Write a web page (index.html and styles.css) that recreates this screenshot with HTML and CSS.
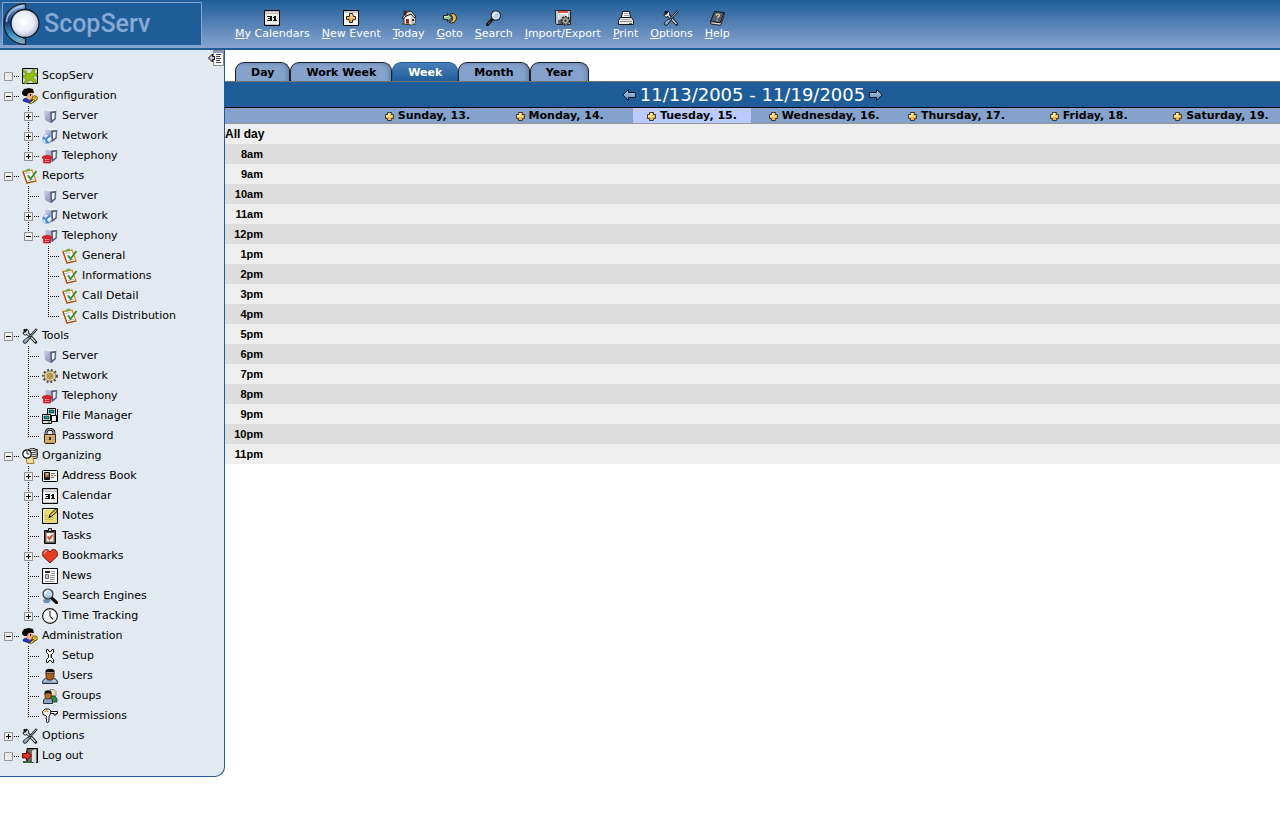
FILE: index.html
```html
<!DOCTYPE html>
<html lang="en">
<head>
<meta charset="utf-8">
<title>ScopServ - Calendar</title>
<link rel="stylesheet" href="styles.css">
</head>
<body>
<svg class="sprite" aria-hidden="true">
  <defs>
    <linearGradient id="g-srv" x1="0" y1="0" x2="1" y2="1"><stop offset="0" stop-color="#d5d8ea"/><stop offset="1" stop-color="#6a70a0"/></linearGradient>
    <linearGradient id="g-gold" x1="0" y1="0" x2="0" y2="1"><stop offset="0" stop-color="#ffe88c"/><stop offset="1" stop-color="#e09a20"/></linearGradient>
    <linearGradient id="g-arrow" x1="0" y1="0" x2="0" y2="1"><stop offset="0" stop-color="#b5d3f0"/><stop offset="1" stop-color="#5583b0"/></linearGradient>
    <radialGradient id="g-ball" cx=".45" cy=".45" r=".6"><stop offset="0" stop-color="#fff"/><stop offset=".6" stop-color="#e9ebf6"/><stop offset="1" stop-color="#9ba4c8"/></radialGradient>
    <linearGradient id="g-ring" x1="0" y1="0" x2="0" y2="1"><stop offset="0" stop-color="#9cc0e6"/><stop offset=".45" stop-color="#123a78"/><stop offset=".8" stop-color="#4aa0cc"/><stop offset="1" stop-color="#9aa8b8"/></linearGradient>
  </defs>

  <symbol id="t-empty" viewBox="0 0 20 20"><path d="M4.500 6.500h8v8h-8z" fill="#ebebeb" stroke="#999"/><path d="M14 10.500h6" stroke="#000" stroke-dasharray="1 1"/></symbol>
  <symbol id="t-box" viewBox="0 0 20 20"><path d="M4.500 6.500h8v8h-8z" fill="#f0f0ea" stroke="#8f8f8f"/><path d="M6 10.500h5" stroke="#000"/><path d="M14 10.500h5" stroke="#000" stroke-dasharray="1 1"/></symbol>
  <symbol id="t-minus" viewBox="0 0 20 20"><use href="#t-box"/></symbol>
  <symbol id="t-plus" viewBox="0 0 20 20"><use href="#t-box"/><path d="M8.500 8v5" stroke="#000"/></symbol>
  <symbol id="t-mid" viewBox="0 0 20 20"><path d="M8.500 0v20M10 10.500h9" stroke="#000" stroke-dasharray="1 1"/></symbol>
  <symbol id="t-end" viewBox="0 0 20 20"><path d="M8.500 0v11M10 10.500h9" stroke="#000" stroke-dasharray="1 1"/></symbol>
  <symbol id="t-midplus" viewBox="0 0 20 20"><path d="M8.500 0v20" stroke="#000" stroke-dasharray="1 1"/><use href="#t-plus"/></symbol>
  <symbol id="t-endplus" viewBox="0 0 20 20"><path d="M8.500 0v6" stroke="#000" stroke-dasharray="1 1"/><use href="#t-plus"/></symbol>
  <symbol id="t-endminus" viewBox="0 0 20 20"><path d="M8.500 0v6" stroke="#000" stroke-dasharray="1 1"/><use href="#t-minus"/></symbol>

  <symbol id="i-cal" viewBox="0 0 16 16"><path d="M.5 .5h15v15H.5z" fill="#efefed" stroke="#000"/><path d="M1 1h14v3H1z" fill="#bdbdbd"/><path d="M2 2h12v1H2z" fill="#dedede"/><path d="M1 14h14v1H1z" fill="#c4c4c4"/><path d="M3 6h4v1H3zM6 6h2v5H6zM4 8h3v1H4zM3 10h4v1H3zM10 6h2v5h-2zM9 7h1v1H9zM9 10h4v1H9z" fill="#111"/></symbol>
  <symbol id="i-newev" viewBox="0 0 16 16"><path d="M.5 .5h15v15H.5z" fill="#f4f4f2" stroke="#000"/><path d="M1 1h14v2H1z" fill="#c6c6c6"/><path d="M6.500 3.500h3l1 3h2v3l-3 .5v2.500h-3l-.5-3H3.500v-3h3z" fill="url(#g-gold)" stroke="#222"/></symbol>
  <symbol id="i-add" viewBox="0 0 9 9"><path d="M2.500 .5h4v2h2v4h-2v2h-4v-2h-2v-4h2z" fill="#f6b440" stroke="#3a3a3e"/><path d="M3 1h2v3h2v1H1V3h2z" fill="#ffe99a"/></symbol>
  <symbol id="i-home" viewBox="0 0 16 16"><path d="M3 7v7l7 1 4-2V7l-3-4z" fill="#f7f4ee" stroke="#333"/><path d="M10 8l4-1v6l-4 2z" fill="#c5c2ba"/><path d="M1 8l5-6 4-1 5 6-2 .5L10 4 5 6 3 8.500z" fill="#d9d6cf" stroke="#111" stroke-width=".9"/><path d="M3 1h2v4H3z" fill="#8c2a20" stroke="#111" stroke-width=".6"/><path d="M5 9h3v5l-3-.4z" fill="#a5281c"/><path d="M11 9h2v2h-2z" fill="#333"/><path d="M1 13h2v2H1zM12 14h3v1h-3z" fill="#3f6d2c"/></symbol>
  <symbol id="i-goto" viewBox="0 0 16 16"><path d="M10 3.500c3 0 4.500 2 4.500 4.300S12.700 13 9.500 13c-1 0-2-.4-2.500-1 2 0 3.500-1.500 3.500-3.500S9.500 5 8 4.500z" fill="#e4b93a" stroke="#222"/><path d="M1.500 5.500h4V3.200L10 7.500l-4.500 4.300V9.500h-4z" fill="#9bc48b" stroke="#222"/><path d="M2 6h4.500v1H2z" fill="#d8edcc"/></symbol>
  <symbol id="i-search" viewBox="0 0 16 16"><path d="M1.500 14.500l5-5.500" stroke="#111" stroke-width="3.200" stroke-linecap="round"/><path d="M2 14l2.500-2.800" stroke="#77716a" stroke-width="1"/><circle cx="9.800" cy="5.500" r="4.600" fill="#b7d2ee" stroke="#222" stroke-width="1.200"/><circle cx="9.800" cy="5.500" r="3.600" fill="none" stroke="#e8f0f8" stroke-width=".8"/><path d="M7.500 5.500c0-1.500 1-2.300 2.300-2.300" stroke="#fff" fill="none" stroke-width="1.200"/></symbol>
  <symbol id="i-imex" viewBox="0 0 16 16"><path d="M.5 .5h15v14H2l-1.500-1z" fill="#bcc6d4" stroke="#222"/><path d="M3 1h10v7H3z" fill="#fff"/><path d="M3 1h10v2H3z" fill="#dc5444"/><path d="M4 5h7M4 7h5" stroke="#aaa"/><path d="M3 10h5v4H3z" fill="#667"/><circle cx="10.500" cy="10.800" r="4.200" fill="#aaa694" stroke="#222" stroke-width="1.400" stroke-dasharray="2 1.100"/><circle cx="10.500" cy="10.800" r="3.200" fill="#b5b19f" stroke="#333" stroke-width=".7"/><circle cx="10.500" cy="10.800" r="1.200" fill="#333"/></symbol>
  <symbol id="i-print" viewBox="0 0 16 16"><path d="M4.500 1.500h7l1 6h-9z" fill="#fff" stroke="#111"/><path d="M6 3.500h4M6 5.500h5" stroke="#999"/><path d="M2.500 7.500h11l2 3v4H.5v-4z" fill="#ecebe4" stroke="#111"/><path d="M2 11.500h12" stroke="#888"/><path d="M3 9.500h10" stroke="#aaa"/><path d="M11 13.500h3" stroke="#3a8a3a"/></symbol>
  <symbol id="i-tools" viewBox="0 0 16 16"><path d="M3 2.500L13.500 14" stroke="#111" stroke-width="3.200" stroke-linecap="round"/><path d="M1 4.500C1 7 3 7.500 5 6.500L6.500 5C7 3 6 1 4 1l.5 2L3 4.200z" fill="#d5dbe0" stroke="#111" stroke-width=".9"/><path d="M4.500 4.500L13.500 14" stroke="#d9dfe4" stroke-width="1.300"/><path d="M14.800 1L7.500 9" stroke="#111" stroke-width="2.200"/><path d="M14.500 1.300L8 8.500" stroke="#dde2e8" stroke-width=".8"/><path d="M7.500 8.300l1 1-3.500 5c-1.200 1.200-2.800 1.300-3.500.4-.7-1 0-2 1-3z" fill="#7e9dbc" stroke="#111" stroke-width=".9"/><path d="M3 12.500l2.500-2" stroke="#c7d9ea"/></symbol>
  <symbol id="i-book" viewBox="0 0 16 16"><path d="M5.500 1.500l9.500 1-3.500 10.300-10-1.200z" fill="#4d5f74" stroke="#111"/><path d="M1.500 11.600l.5 2.400 9.700 1.300 3.300-9.500V2.500l-3.500 10.300z" fill="#d9d9d2" stroke="#111" stroke-width=".9"/><path d="M7 5.500c.5-2 3.800-1.800 3.500 0-.3 1.300-1.800 1-2.200 2.800M8 10v1" fill="none" stroke="#e8d67c" stroke-width="1.200"/></symbol>
  <symbol id="i-scop" viewBox="0 0 16 16"><path d="M.5 .5h15v15H.5z" fill="#d3d6d4" stroke="#000"/><path d="M1 2l3 1 2 3 3-1 2-4h2l-1 4 3 1v2l-3 0-1 2 3 2v3h-2l-3-3-3 1-2 3-2-1 2-4-3-2V7l3 1-1-3-2-1z" fill="#8fc010" stroke="#5b8208" stroke-width=".6"/></symbol>
  <symbol id="i-admin" viewBox="0 0 16 16"><path d="M1 13c0-3 3-3 5-3 3 0 6 1 6 4l-5 1z" fill="#1838c8" stroke="#001060" stroke-width=".6"/><path d="M3 4h8v6l-3 2-4-2z" fill="#f3b072"/><path d="M0 4l2-3 5-1 4 1 1 4h-2L9 4.500 6 5.500 5 8H2L0 6z" fill="#0a0a0a"/><path d="M8 6h1v2H8z" fill="#000"/><path d="M6 11l2 2-1 1z" fill="#e42020"/><circle cx="12.800" cy="10.300" r="2.500" fill="#ffe030" stroke="#4a3900" stroke-width=".9"/><circle cx="13" cy="10" r=".8" fill="#7a6000"/><path d="M11.500 11.500L7.500 15l2 .6 3.500-3z" fill="#ffd820" stroke="#4a3900" stroke-width=".8"/></symbol>
  <symbol id="i-server" viewBox="0 0 16 16"><path d="M2 2.500L5 1h9.500L14 11l-5 4.300-6-3.300z" fill="url(#g-srv)"/><path d="M2.500 2.200L5 1h9.500L14 3 8 3.500z" fill="#eef0f8"/><path d="M8 3.800l6-.8-.5 8.200L9 15z" fill="#565d7c"/><path d="M9.800 5.200l3-.5-.4 5.700-2.300 1.700z" fill="#f4f6fc"/></symbol>
  <symbol id="i-net" viewBox="0 0 16 16"><use href="#i-server" x="1" y="-1" width="16" height="16"/><circle cx="5" cy="11" r="4.500" fill="#4585dc" stroke="#8eb1e4" stroke-width=".6"/><path d="M2 8c1-1 3-1.500 4-1l-1 2-2 1zM6 10l3-1c.5 2-.5 4-2 5l-2-2zM1 11l2 1 1 3c-2-.5-3-2-3-4z" fill="#f1f6fb"/></symbol>
  <symbol id="i-phone" viewBox="0 0 16 16"><use href="#i-server" x="1" y="-1" width="16" height="16"/><path d="M.5 9c0-2 9-2 9 0v1.500H8.500V15h-7v-4.500h-1z" fill="#e21f26" stroke="#c01018" stroke-width=".6"/><path d="M3 11.500h4M3 13.500h4" stroke="#ffc0b8" stroke-dasharray="1 .6"/></symbol>
  <symbol id="i-report" viewBox="0 0 16 16"><path d="M1 3.500l9-1.500 4 11-9 2z" fill="#fdfcf6" stroke="#e88a28" stroke-width="1.300"/><path d="M1 3.500L5 15l9-2" fill="none" stroke="#a8481c" stroke-width="1.200"/><path d="M3.500 5.500l5-1M4.500 8l2-.5M6 12.500l6-1.500" stroke="#9fb2d8"/><path d="M6 7.500l2.500 3.500L14.500 3" fill="none" stroke="#2b8f38" stroke-width="1.800"/><path d="M3 2.500l4-2.200 1.500 2L4 3.800z" fill="#58a94c"/></symbol>
  <symbol id="i-gear" viewBox="0 0 16 16"><ellipse cx="8" cy="8" rx="6.300" ry="5.500" fill="none" stroke="#4b4335" stroke-width="3.200" stroke-dasharray="1.600 1.900"/><ellipse cx="8" cy="8" rx="5.800" ry="5" fill="#e6d2a8" stroke="#78674c" stroke-width=".7"/><circle cx="8" cy="8" r="3" fill="#efb04a" stroke="#a8874a"/><circle cx="8" cy="8" r="1.300" fill="#fff1c2" stroke="#444" stroke-width=".7"/></symbol>
  <symbol id="i-file" viewBox="0 0 16 16"><path d="M5.500 .5h8v7h-8z" fill="#e8e8e8" stroke="#000"/><path d="M7 2h5v3H7z" fill="#128a8a" stroke="#000" stroke-width=".5"/><path d="M9.500 7.500h5v6h-5z" fill="#f3f3f3" stroke="#000"/><path d="M.5 6.500h8v6h-8z" fill="#eee" stroke="#000"/><path d="M2 8h5v3H2z" fill="#18a0a0" stroke="#000" stroke-width=".5"/><path d="M.5 12.500h9v3h-9z" fill="#ddd" stroke="#000"/><path d="M15.500 1v13" stroke="#000"/><path d="M6 14h2" stroke="#008000"/></symbol>
  <symbol id="i-lock" viewBox="0 0 16 16"><path d="M4 7V5c0-5 8-5 8 0v2" fill="none" stroke="#222" stroke-width="3"/><path d="M4 7V5c0-5 8-5 8 0v2" fill="none" stroke="#c8c8c8" stroke-width="1"/><path d="M2.500 6.500h11v8l-1 1h-9l-1-1z" fill="#c99a5e" stroke="#3c2a14"/><path d="M3 8h10M3 10.500h10M3 13h10" stroke="#e5c08a"/><path d="M7 9h2v3H7z" fill="#3a2612"/></symbol>
  <symbol id="i-org" viewBox="0 0 16 16"><path d="M6 2l4-2 6 2-1 8-6 1z" fill="#fff" stroke="#111"/><path d="M7 3l3-1 5 1M8 5l7-1M9 7l6-1M9 9l6-1" stroke="#333" fill="none"/><path d="M4 8.500h7l1 7H5z" fill="#f2d899" stroke="#8a6420" stroke-width=".8"/><circle cx="5" cy="6" r="4.200" fill="#fff" stroke="#111" stroke-width="1.200"/><path d="M5 3v3h2.500" fill="none" stroke="#222"/></symbol>
  <symbol id="i-card" viewBox="0 0 16 16"><rect x=".5" y="2.500" width="15" height="11" rx="1" fill="#f1f1ee" stroke="#000"/><path d="M2.500 4.500h5v7h-5z" fill="#a57035" stroke="#111"/><path d="M4 5h2v2H4z" fill="#e5a860"/><path d="M3 9h4v2H3z" fill="#222"/><path d="M9 5.500h4M9 7.500h2M12 7.500h2M9 9.500h3" stroke="#777"/></symbol>
  <symbol id="i-notes" viewBox="0 0 16 16"><path d="M.5 .5h15v15H.5z" fill="#e7dc74" stroke="#000"/><path d="M1.500 14.500v-13h13" fill="none" stroke="#f7f0a8"/><path d="M3 7.500h3M3 9.500h9M3 11.500h8" stroke="#cbbd54"/><path d="M7 9.500l1-3L13.500 1 15.500 3 10 8z" fill="#e8c040" stroke="#111"/><path d="M7 9.500l1-2 1 1z" fill="#000"/></symbol>
  <symbol id="i-tasks" viewBox="0 0 16 16"><path d="M2.500 2.500h11v13h-11z" fill="#6c5444" stroke="#000"/><path d="M4.500 5h7v8.500h-7z" fill="#f6f6f6"/><path d="M4.500 3.500v-1h2v-2h3v2h2v1z" fill="#b8b8b8" stroke="#111"/><path d="M5.500 8.500l2 2.500L10.500 7" fill="none" stroke="#e03a20" stroke-width="1.800"/></symbol>
  <symbol id="i-heart" viewBox="0 0 16 16"><path d="M8 15L1.500 9C-.5 6.500 .5 2 4 1.600 6 1.400 7.400 2.500 8 4c.6-1.500 2-2.600 4-2.400C15.500 2 16.500 6.500 14.500 9z" fill="#e83c22" stroke="#5e160c" stroke-width=".9"/><path d="M2.500 6c0-2 1-3 2.500-3" fill="none" stroke="#ff9a7c" stroke-width="1.300"/></symbol>
  <symbol id="i-news" viewBox="0 0 16 16"><path d="M.5 .5h15v15H.5z" fill="#fafafa" stroke="#000"/><path d="M3 3h5v2H3z" fill="#222"/><path d="M9 3.500h4M9 5.500h4M8 7.500h5M8 9.500h5M8 11.500h5M3 13.500h9" stroke="#999"/><path d="M3.500 6.500h3v4h-3z" fill="#ccc" stroke="#666"/></symbol>
  <symbol id="i-find" viewBox="0 0 16 16"><path d="M9 9.500l5.500 5" stroke="#111" stroke-width="3.200" stroke-linecap="round"/><path d="M1 12l4-2 4 2-2 3H2z" fill="#6d93b4"/><circle cx="6" cy="6" r="5" fill="#bed8ea" stroke="#333" stroke-width="1.200"/><path d="M3 6c0-2 1-3 3-3" fill="none" stroke="#fff" stroke-width="1.500"/><path d="M8 8.500c-1 1-3 1-4 0" stroke="#7ca3c4" fill="none"/></symbol>
  <symbol id="i-clock" viewBox="0 0 16 16"><circle cx="8" cy="8" r="7.400" fill="#f8f8f8" stroke="#111" stroke-width="1.100"/><circle cx="8" cy="8" r="6" fill="none" stroke="#bbb" stroke-dasharray="1 2.140"/><path d="M8 3v5l3 3.500" fill="none" stroke="#222" stroke-width="1.100"/></symbol>
  <symbol id="i-wrench" viewBox="0 0 16 16"><path d="M4.500 1.500v3l2 2v3l-2 2v3h1.500l1-2h2l1 2h1.500v-3l-2-2v-3l2-2v-3H10l-1 2H7l-1-2z" fill="#f8f8f4" stroke="#111"/><path d="M8.500 6v4" stroke="#aaa"/></symbol>
  <symbol id="i-user" viewBox="0 0 16 16"><path d="M.5 15.500c0-4 2-5 5-5.500h5c3 .5 5 1.500 5 5.500z" fill="#8ca4c4" stroke="#222c40"/><path d="M4 5h8v4l-2 3H6L4 9z" fill="#a9601c" stroke="#3a1b04" stroke-width=".8"/><path d="M3.500 6V3c0-3 9-3 9 0v3l-1-2h-7z" fill="#101010"/><path d="M10 13h4M2 13h2" stroke="#dfe9f5"/></symbol>
  <symbol id="i-group" viewBox="0 0 16 16"><path d="M8 1.500h4l2 2V8h-5z" fill="#e8dcae" stroke="#777" stroke-width=".7"/><path d="M8 8h5l2 3v3H9z" fill="#2c8a3c" stroke="#163c1c" stroke-width=".8"/><path d="M1.500 15.500V12l2-2h5l2 2v3.500z" fill="#8ca4c4" stroke="#222c40"/><path d="M3 5h6v4l-1.500 2h-3L3 9z" fill="#b8701f" stroke="#3a1b04" stroke-width=".7"/><path d="M2.500 7V4.500c0-3 7-3 7 0V7l-1.500-2H4z" fill="#141414"/></symbol>
  <symbol id="i-key" viewBox="0 0 16 16"><path d="M6 3.500h9.500v2H14v1.500h-2V5.500H8z" fill="#eee" stroke="#111" stroke-width="1"/><path d="M.5 3.500L3 1h4l2 2-1 4-1 1v5L5.500 15 4 13l1-1-1-1 .5-3L1 6.500z" fill="#f1efe5" stroke="#111" stroke-width="1"/><path d="M2.500 4c1-1.500 3-1.500 4 0" fill="none" stroke="#c79a28" stroke-width="1.200"/></symbol>
  <symbol id="i-exit" viewBox="0 0 16 16"><path d="M5 .5h10.500v14H5z" fill="#686868" stroke="#000"/><path d="M10 2.500l4-1.500v14.500l-4-1.500z" fill="#ddd"/><path d="M1 13h9v2H1z" fill="#2b6a2f"/><path d="M.5 5.500h4V3l5 4.700-5 4.800V10h-4z" fill="#e33226" stroke="#5c0a06"/></symbol>
  <symbol id="i-prev" viewBox="0 0 14 14"><path d="M.8 7L6.500 1.500v3h7v5h-7v3z" fill="url(#g-arrow)" stroke="#0b1a2c"/></symbol>
  <symbol id="i-next" viewBox="0 0 14 14"><path d="M13.200 7L7.500 1.500v3h-7v5h7v3z" fill="url(#g-arrow)" stroke="#0b1a2c"/></symbol>
  <symbol id="i-hide" viewBox="0 0 16 16"><path d="M5.500 .5h10v15h-10z" fill="#f5f5f5" stroke="#8b8b8b"/><path d="M6 2h9" stroke="#9c96c4" stroke-width="2"/><path d="M8 4.500h5M8 6.500h4M8 8.500h5M8 10.500h4M8 12.500h5" stroke="#444"/><path d="M.5 8l4-4v2.500h2v3h-2V12z" fill="#c8c2e8" stroke="#111"/></symbol>
  <symbol id="logo" viewBox="0 0 38 42"><path d="M22.500 .5C10 1 1 9 1 20.500S10 41 22.500 41.500v-6C15 34 9 29 9 20.500S15 8 22.500 6.500z" fill="url(#g-ring)" stroke="#1d242c" stroke-width="1.300"/><path d="M20 3C10 5 4 11 3.500 19" fill="none" stroke="#a8c9ec" stroke-width="1.300"/><circle cx="22" cy="20.500" r="14" fill="url(#g-ball)" stroke="#14181f" stroke-width="1.300"/></symbol>
</svg>

<header class="topbar">
  <a class="brand" href="#"><svg class="brand-mark"><use href="#logo"/></svg><span class="brand-name">ScopServ</span></a>
  <nav class="toolbar" aria-label="Calendar actions">
    <a href="#"><svg class="icon"><use href="#i-cal"/></svg><span><u>M</u>y Calendars</span></a>
    <a href="#"><svg class="icon"><use href="#i-newev"/></svg><span><u>N</u>ew Event</span></a>
    <a href="#"><svg class="icon"><use href="#i-home"/></svg><span><u>T</u>oday</span></a>
    <a href="#"><svg class="icon"><use href="#i-goto"/></svg><span><u>G</u>oto</span></a>
    <a href="#"><svg class="icon"><use href="#i-search"/></svg><span><u>S</u>earch</span></a>
    <a href="#"><svg class="icon"><use href="#i-imex"/></svg><span><u>I</u>mport/Export</span></a>
    <a href="#"><svg class="icon"><use href="#i-print"/></svg><span><u>P</u>rint</span></a>
    <a href="#"><svg class="icon"><use href="#i-tools"/></svg><span><u>O</u>ptions</span></a>
    <a href="#"><svg class="icon"><use href="#i-book"/></svg><span><u>H</u>elp</span></a>
  </nav>
</header>

<div class="layout">
  <aside class="sidebar">
    <button class="hide" type="button" aria-label="Hide menu"><svg class="icon"><use href="#i-hide"/></svg></button>
    <ul class="tree">
      <li><a href="#"><svg class="twig"><use href="#t-empty"/></svg><svg class="icon"><use href="#i-scop"/></svg>ScopServ</a></li>
      <li><a href="#"><svg class="twig"><use href="#t-minus"/></svg><svg class="icon"><use href="#i-admin"/></svg>Configuration</a>
        <ul>
          <li><a href="#"><svg class="twig"><use href="#t-midplus"/></svg><svg class="icon"><use href="#i-server"/></svg>Server</a></li>
          <li><a href="#"><svg class="twig"><use href="#t-midplus"/></svg><svg class="icon"><use href="#i-net"/></svg>Network</a></li>
          <li><a href="#"><svg class="twig"><use href="#t-endplus"/></svg><svg class="icon"><use href="#i-phone"/></svg>Telephony</a></li>
        </ul>
      </li>
      <li><a href="#"><svg class="twig"><use href="#t-minus"/></svg><svg class="icon"><use href="#i-report"/></svg>Reports</a>
        <ul>
          <li><a href="#"><svg class="twig"><use href="#t-mid"/></svg><svg class="icon"><use href="#i-server"/></svg>Server</a></li>
          <li><a href="#"><svg class="twig"><use href="#t-midplus"/></svg><svg class="icon"><use href="#i-net"/></svg>Network</a></li>
          <li><a href="#"><svg class="twig"><use href="#t-endminus"/></svg><svg class="icon"><use href="#i-phone"/></svg>Telephony</a>
            <ul>
              <li><a href="#"><svg class="twig"><use href="#t-mid"/></svg><svg class="icon"><use href="#i-report"/></svg>General</a></li>
              <li><a href="#"><svg class="twig"><use href="#t-mid"/></svg><svg class="icon"><use href="#i-report"/></svg>Informations</a></li>
              <li><a href="#"><svg class="twig"><use href="#t-mid"/></svg><svg class="icon"><use href="#i-report"/></svg>Call Detail</a></li>
              <li><a href="#"><svg class="twig"><use href="#t-end"/></svg><svg class="icon"><use href="#i-report"/></svg>Calls Distribution</a></li>
            </ul>
          </li>
        </ul>
      </li>
      <li><a href="#"><svg class="twig"><use href="#t-minus"/></svg><svg class="icon"><use href="#i-tools"/></svg>Tools</a>
        <ul>
          <li><a href="#"><svg class="twig"><use href="#t-mid"/></svg><svg class="icon"><use href="#i-server"/></svg>Server</a></li>
          <li><a href="#"><svg class="twig"><use href="#t-mid"/></svg><svg class="icon"><use href="#i-gear"/></svg>Network</a></li>
          <li><a href="#"><svg class="twig"><use href="#t-mid"/></svg><svg class="icon"><use href="#i-phone"/></svg>Telephony</a></li>
          <li><a href="#"><svg class="twig"><use href="#t-mid"/></svg><svg class="icon"><use href="#i-file"/></svg>File Manager</a></li>
          <li><a href="#"><svg class="twig"><use href="#t-end"/></svg><svg class="icon"><use href="#i-lock"/></svg>Password</a></li>
        </ul>
      </li>
      <li><a href="#"><svg class="twig"><use href="#t-minus"/></svg><svg class="icon"><use href="#i-org"/></svg>Organizing</a>
        <ul>
          <li><a href="#"><svg class="twig"><use href="#t-midplus"/></svg><svg class="icon"><use href="#i-card"/></svg>Address Book</a></li>
          <li><a href="#"><svg class="twig"><use href="#t-midplus"/></svg><svg class="icon"><use href="#i-cal"/></svg>Calendar</a></li>
          <li><a href="#"><svg class="twig"><use href="#t-mid"/></svg><svg class="icon"><use href="#i-notes"/></svg>Notes</a></li>
          <li><a href="#"><svg class="twig"><use href="#t-mid"/></svg><svg class="icon"><use href="#i-tasks"/></svg>Tasks</a></li>
          <li><a href="#"><svg class="twig"><use href="#t-midplus"/></svg><svg class="icon"><use href="#i-heart"/></svg>Bookmarks</a></li>
          <li><a href="#"><svg class="twig"><use href="#t-mid"/></svg><svg class="icon"><use href="#i-news"/></svg>News</a></li>
          <li><a href="#"><svg class="twig"><use href="#t-mid"/></svg><svg class="icon"><use href="#i-find"/></svg>Search Engines</a></li>
          <li><a href="#"><svg class="twig"><use href="#t-endplus"/></svg><svg class="icon"><use href="#i-clock"/></svg>Time Tracking</a></li>
        </ul>
      </li>
      <li><a href="#"><svg class="twig"><use href="#t-minus"/></svg><svg class="icon"><use href="#i-admin"/></svg>Administration</a>
        <ul>
          <li><a href="#"><svg class="twig"><use href="#t-mid"/></svg><svg class="icon"><use href="#i-wrench"/></svg>Setup</a></li>
          <li><a href="#"><svg class="twig"><use href="#t-mid"/></svg><svg class="icon"><use href="#i-user"/></svg>Users</a></li>
          <li><a href="#"><svg class="twig"><use href="#t-mid"/></svg><svg class="icon"><use href="#i-group"/></svg>Groups</a></li>
          <li><a href="#"><svg class="twig"><use href="#t-end"/></svg><svg class="icon"><use href="#i-key"/></svg>Permissions</a></li>
        </ul>
      </li>
      <li><a href="#"><svg class="twig"><use href="#t-plus"/></svg><svg class="icon"><use href="#i-tools"/></svg>Options</a></li>
      <li><a href="#"><svg class="twig"><use href="#t-empty"/></svg><svg class="icon"><use href="#i-exit"/></svg>Log out</a></li>
    </ul>
  </aside>

  <main class="content">
    <nav class="tabs" aria-label="Views">
      <a href="#">Day</a>
      <a href="#">Work Week</a>
      <a class="active" href="#" aria-current="page">Week</a>
      <a href="#">Month</a>
      <a href="#">Year</a>
    </nav>
    <div class="period">
      <a href="#" aria-label="Previous week"><svg class="arrow"><use href="#i-prev"/></svg></a>
      <h1>11/13/2005 - 11/19/2005</h1>
      <a href="#" aria-label="Next week"><svg class="arrow"><use href="#i-next"/></svg></a>
    </div>
    <table class="week">
      <colgroup><col class="c-time"><col class="c-gap"><col class="c-narrow"><col class="c-wide"><col class="c-narrow"><col class="c-wide"><col class="c-narrow"><col class="c-wide"><col class="c-narrow"></colgroup>
      <thead>
        <tr>
          <td colspan="2"></td>
          <th scope="col"><a href="#"><svg class="add"><use href="#i-add"/></svg>Sunday, 13.</a></th>
          <th scope="col"><a href="#"><svg class="add"><use href="#i-add"/></svg>Monday, 14.</a></th>
          <th scope="col" class="today"><a href="#"><svg class="add"><use href="#i-add"/></svg>Tuesday, 15.</a></th>
          <th scope="col"><a href="#"><svg class="add"><use href="#i-add"/></svg>Wednesday, 16.</a></th>
          <th scope="col"><a href="#"><svg class="add"><use href="#i-add"/></svg>Thursday, 17.</a></th>
          <th scope="col"><a href="#"><svg class="add"><use href="#i-add"/></svg>Friday, 18.</a></th>
          <th scope="col"><a href="#"><svg class="add"><use href="#i-add"/></svg>Saturday, 19.</a></th>
        </tr>
      </thead>
      <tbody>
        <tr class="allday"><th scope="row">All day</th><td colspan="8"></td></tr>
        <tr><th scope="row">8am</th><td colspan="8"></td></tr>
        <tr><th scope="row">9am</th><td colspan="8"></td></tr>
        <tr><th scope="row">10am</th><td colspan="8"></td></tr>
        <tr><th scope="row">11am</th><td colspan="8"></td></tr>
        <tr><th scope="row">12pm</th><td colspan="8"></td></tr>
        <tr><th scope="row">1pm</th><td colspan="8"></td></tr>
        <tr><th scope="row">2pm</th><td colspan="8"></td></tr>
        <tr><th scope="row">3pm</th><td colspan="8"></td></tr>
        <tr><th scope="row">4pm</th><td colspan="8"></td></tr>
        <tr><th scope="row">5pm</th><td colspan="8"></td></tr>
        <tr><th scope="row">6pm</th><td colspan="8"></td></tr>
        <tr><th scope="row">7pm</th><td colspan="8"></td></tr>
        <tr><th scope="row">8pm</th><td colspan="8"></td></tr>
        <tr><th scope="row">9pm</th><td colspan="8"></td></tr>
        <tr><th scope="row">10pm</th><td colspan="8"></td></tr>
        <tr><th scope="row">11pm</th><td colspan="8"></td></tr>
      </tbody>
    </table>
  </main>
</div>
</body>
</html>
```
FILE: styles.css
```css
:root {
  --blue: #1f5d99;
  --light: #84a2cb;
  --panel: #e3e9f1;
}

* { box-sizing: border-box; }

body {
  margin: 0;
  background: #fff;
  color: #000;
  font: 11px/14px "DejaVu Sans", Verdana, sans-serif;
}

a { color: inherit; text-decoration: none; }
svg { display: block; flex: none; }
.sprite { position: absolute; width: 0; height: 0; }
.icon { width: 16px; height: 16px; }

/* Top bar */
.topbar {
  display: flex;
  align-items: flex-start;
  gap: 33px;
  height: 50px;
  padding: 2px 0 0 2px;
  border-bottom: 2px solid var(--blue);
  background: linear-gradient(var(--blue), #88a5cf);
}
.brand {
  display: flex;
  align-items: center;
  gap: 3px;
  width: 200px;
  height: 44px;
  border: 1px solid var(--light);
  background: var(--blue);
}
.brand-mark { width: 38px; height: 42px; }
.brand-name {
  color: #88a9d3;
  font: 500 25px/42px Roboto, "Liberation Sans", sans-serif;
}
.toolbar { display: flex; gap: 12px; padding-top: 8px; color: #fff; }
.toolbar a { display: flex; flex-direction: column; align-items: center; line-height: 16px; white-space: nowrap; }

.layout { display: flex; align-items: flex-start; }

/* Navigation tree */
.sidebar {
  flex: none;
  width: 225px;
  padding-bottom: 10px;
  border: solid var(--blue);
  border-width: 0 1px 1px 0;
  border-radius: 0 0 10px 0;
  background: var(--panel);
}
.hide { display: block; margin-left: auto; padding: 0; border: 0; background: none; cursor: pointer; }
.tree, .tree ul { margin: 0; padding: 0; list-style: none; }
.tree ul { padding-left: 20px; }
.tree a { display: flex; align-items: center; height: 20px; line-height: 18px; }
.tree .icon { margin: 0 4px 0 2px; }
.twig { width: 20px; height: 20px; }

/* View tabs */
.content { flex: 1; min-width: 0; }
.tabs {
  display: flex;
  padding: 12px 10px 0;
  border-bottom: 1px solid #77736c;
  font-weight: bold;
}
.tabs a {
  height: 19px;
  padding: 3px 15px 0;
  border: 1px solid #1a1f28;
  border-bottom: 0;
  border-radius: 9px 9px 0 0;
  background: var(--light);
  box-shadow: inset -3px 1px 3px #6f8bb3;
}
.tabs .active {
  border-color: var(--blue);
  background: linear-gradient(#4a7fb8, var(--blue));
  box-shadow: none;
  color: #fff;
}

/* Week heading */
.period {
  display: flex;
  align-items: center;
  justify-content: center;
  gap: 4px;
  height: 26px;
  border-bottom: 1px solid #000;
  background: var(--blue);
  color: #fff;
}
.period h1 { margin: 0; font-size: 18px; font-weight: normal; line-height: 24px; }
.arrow { width: 14px; height: 14px; }

/* Week grid */
.week { width: 100%; border-collapse: collapse; table-layout: fixed; }
.week th, .week td { padding: 0; }
.c-time { width: 38px; }
.c-gap { width: 10%; }
.c-narrow { width: 11.2%; }
.c-wide { width: 13.9%; }
.week thead tr { height: 16px; background: var(--light); box-shadow: inset 0 -1px #999; }
.week thead a { display: flex; align-items: center; justify-content: center; gap: 4px; line-height: 16px; white-space: nowrap; }
.week .today { background: #bbcbff; box-shadow: inset 0 -1px #999; }
.add { width: 9px; height: 9px; }
.week tbody tr { height: 20px; background: #ddd; }
.week tbody tr:nth-child(odd) { background: #eee; }
.week tbody th { font: bold 11px/14px "Liberation Sans", Arial, sans-serif; text-align: right; white-space: nowrap; }
.week .allday th { font-size: 12px; }
```
